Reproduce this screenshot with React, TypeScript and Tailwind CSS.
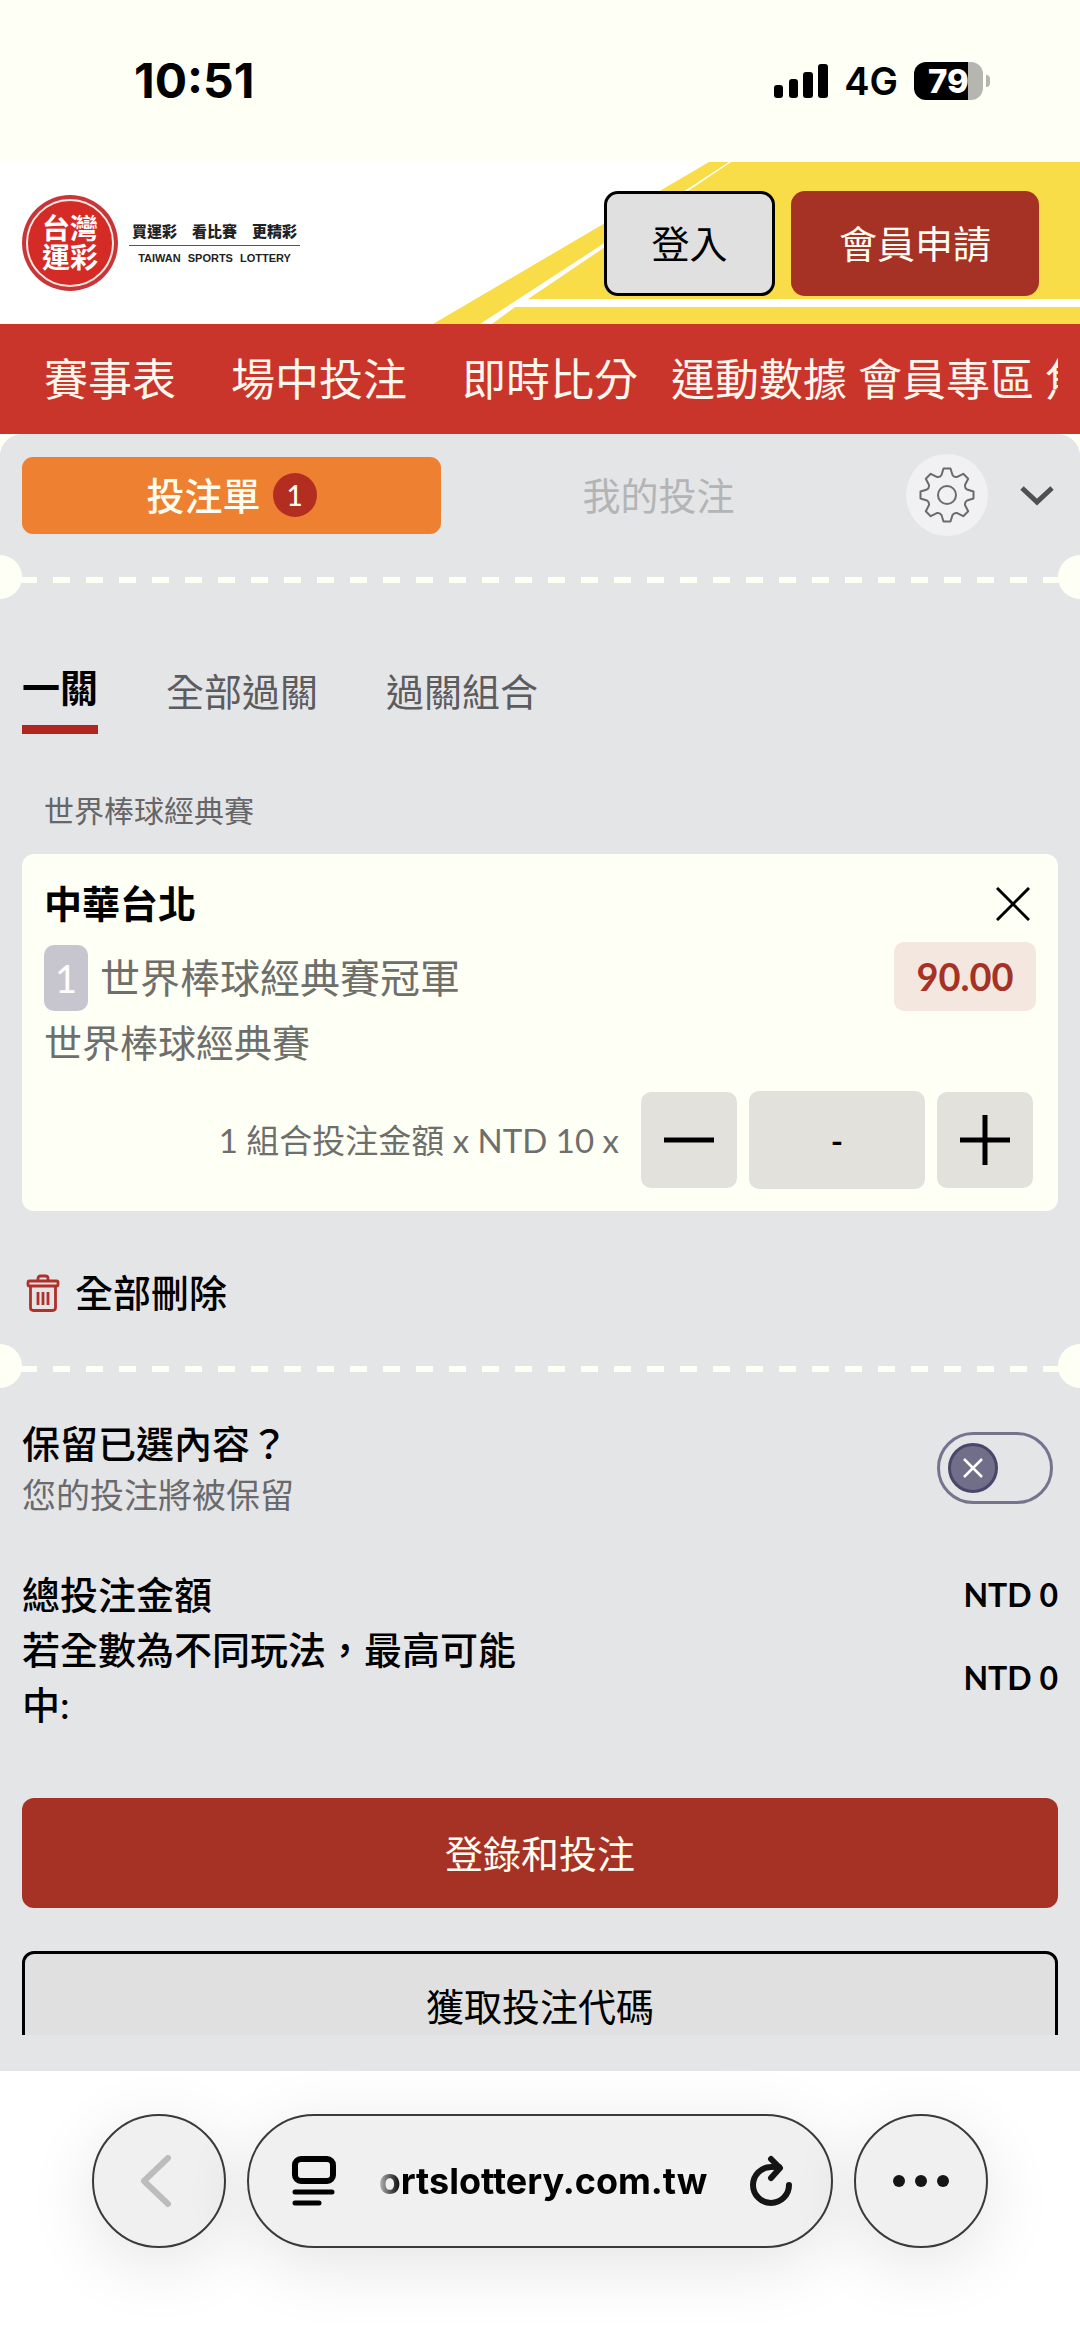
import { useState } from 'react'

const navItems = [
  { label: '賽事表', wide: true },
  { label: '場中投注', wide: true },
  { label: '即時比分', wide: true },
  { label: '運動數據', wide: false },
  { label: '會員專區', wide: false },
  { label: '焦點賽事', wide: false },
]

const betTypes = ['一關', '全部過關', '過關組合']

function StatusBar() {
  return (
    <div className="flex h-[162px] items-center justify-between pl-[134px] pr-[90px] font-['Inter',sans-serif] text-black">
      <span className="text-[48px] font-bold leading-[54px]">10:51</span>
      <div className="flex items-center">
        <svg width="54" height="34" viewBox="0 0 54 34" className="mr-4">
          <rect x="0" y="21" width="9" height="13" rx="3" />
          <rect x="15" y="15" width="9" height="19" rx="3" />
          <rect x="29" y="8" width="10" height="26" rx="3" />
          <rect x="44" y="0" width="10" height="34" rx="3" />
        </svg>
        <span className="text-[38px] font-semibold leading-[46px]">4G</span>
        <div className="ml-4 flex h-[38px] w-[69px] items-center justify-center rounded-[12px] bg-linear-to-r from-black from-78% to-[#b5b6b0] to-78%">
          <span className="text-[33px] font-extrabold leading-[38px] text-white">79</span>
        </div>
        <div className="ml-[3px] h-3 w-1 rounded-r-full bg-[#b5b6b0]" />
      </div>
    </div>
  )
}

function Logo() {
  return (
    <a href="#" className="flex items-center gap-[11px] text-[#222]">
      <span className="flex size-24 items-center justify-center rounded-full bg-[#c9363a] p-1">
        <span className="grid size-full place-content-center rounded-full border-2 border-[#fbe9e4] bg-[#d42b27] text-center text-[28px] font-bold leading-[29px] text-white">
          <span>台灣</span>
          <span>運彩</span>
        </span>
      </span>
      <span className="flex w-[171px] flex-col items-center">
        <span className="flex w-full justify-between border-b border-[#555] px-[3px] pb-1 text-[15px] font-black leading-5">
          <span>買運彩</span>
          <span>看比賽</span>
          <span>更精彩</span>
        </span>
        <span className="flex gap-[7px] pt-1 font-['Liberation_Sans',sans-serif] text-[11px] font-bold leading-4">
          <span>TAIWAN</span>
          <span>SPORTS</span>
          <span>LOTTERY</span>
        </span>
      </span>
    </a>
  )
}

function Header() {
  return (
    <header className="relative flex h-[162px] items-center justify-between bg-white pl-[22px] pr-[41px]">
      <svg className="absolute right-0 top-0" width="650" height="162" viewBox="0 0 650 162">
        <path d="M279 0H299L50 162H3Z" fill="#f8dd48" />
        <path d="M301 0H650V137H98Z" fill="#f8dd48" />
        <path d="M85 145H650V162H62Z" fill="#f8dd48" />
      </svg>
      <Logo />
      <div className="relative flex gap-4 text-[38px]">
        <button className="h-[105px] w-[171px] rounded-[14px] border-3 border-black bg-[#e0e0e0] text-black">登入</button>
        <button className="h-[105px] w-[248px] rounded-[14px] bg-[#a63225] text-[#fffcf2]">會員申請</button>
      </div>
    </header>
  )
}

function Divider() {
  return (
    <div className="relative flex h-11 items-center overflow-hidden">
      <div className="absolute -left-[22px] size-11 rounded-full bg-[#fefff5]" />
      <div className="absolute -right-[22px] size-11 rounded-full bg-[#fefff5]" />
      <svg width="100%" height="12" className="mx-5 mt-[6px]">
        <line x1="0" y1="6" x2="100%" y2="6" stroke="#fefff5" strokeWidth="6" strokeDasharray="17 16" />
      </svg>
    </div>
  )
}

function SlipHeader() {
  return (
    <div className="flex items-center pl-[22px] pr-[26px] pt-5">
      <button className="flex h-[77px] flex-1 items-center justify-center gap-3 rounded-[11px] bg-[#ee8031] text-[38px] font-medium text-[#fffcf0]">
        投注單
        <span className="flex size-11 items-center justify-center rounded-full bg-[#b32d20] text-[28px]">1</span>
      </button>
      <button className="ml-2 h-[77px] flex-1 text-[38px] text-[#b3b4b5]">我的投注</button>
      <button aria-label="設定" className="ml-[38px] flex size-[82px] items-center justify-center rounded-full bg-[#f1f1f4]">
        <svg width="60" height="60" viewBox="-30 -30 60 60" fill="none" stroke="#6b6b6d" strokeWidth="2" strokeLinejoin="round">
          <path d="M-3.5-26.5H3.5L5.5-20Q7-17.5 10.2-18.1L16.3-21.2L21.2-16.3L18.1-10.2Q17.5-7 20-5.5L26.5-3.5V3.5L20 5.5Q17.5 7 18.1 10.2L21.2 16.3L16.3 21.2L10.2 18.1Q7 17.5 5.5 20L3.5 26.5H-3.5L-5.5 20Q-7 17.5-10.2 18.1L-16.3 21.2L-21.2 16.3L-18.1 10.2Q-17.5 7-20 5.5L-26.5 3.5V-3.5L-20-5.5Q-17.5-7-18.1-10.2L-21.2-16.3L-16.3-21.2L-10.2-18.1Q-7-17.5-5.5-20Z" />
          <circle r="9" />
        </svg>
      </button>
      <button aria-label="收合" className="ml-8">
        <svg width="34" height="24" viewBox="0 0 34 24" fill="none" stroke="#4f5052" strokeWidth="5">
          <path d="M2 5L17 19L32 5" />
        </svg>
      </button>
    </div>
  )
}

function BetCard() {
  return (
    <section className="rounded-[12px] bg-[#fefff5] px-[22px] py-[22px]">
      <div className="flex items-center justify-between">
        <h2 className="text-[38px] font-bold leading-[55px] text-black">中華台北</h2>
        <button aria-label="移除" className="mr-[6px]">
          <svg width="34" height="34" viewBox="0 0 34 34" stroke="black" strokeWidth="3">
            <path d="M1 1L33 33M33 1L1 33" />
          </svg>
        </button>
      </div>
      <div className="mt-[11px] flex items-end justify-between">
        <div className="flex items-center gap-3">
          <span className="flex h-[66px] w-11 items-center justify-center rounded-[10px] bg-[#c7c6ce] text-[38px] text-white">1</span>
          <span className="text-[40px] leading-[55px] text-[#6e6e6b]">世界棒球經典賽冠軍</span>
        </div>
        <span className="flex h-[69px] w-[142px] items-center justify-center rounded-[10px] bg-[#f3e7df] text-[38px] font-bold text-[#a63225]">
          90.00
        </span>
      </div>
      <p className="mt-1 text-[38px] leading-[55px] text-[#6e6e6b]">世界棒球經典賽</p>
      <div className="mt-[21px] flex items-center justify-end gap-3 pr-[3px]">
        <label htmlFor="stake" className="mr-[10px] text-[33px] leading-[44px] text-[#6e6e6b]">
          1 組合投注金額 x NTD 10 x
        </label>
        <button aria-label="減少" className="flex size-24 items-center justify-center rounded-[10px] bg-[#e2e1db]">
          <svg width="50" height="50" viewBox="0 0 50 50" stroke="black" strokeWidth="5">
            <path d="M0 25H50" />
          </svg>
        </button>
        <input
          id="stake"
          type="text"
          defaultValue="-"
          className="h-[98px] w-44 rounded-[10px] bg-[#e2e1db] text-center text-[33px] font-bold text-black"
        />
        <button aria-label="增加" className="flex size-24 items-center justify-center rounded-[10px] bg-[#e2e1db]">
          <svg width="50" height="50" viewBox="0 0 50 50" stroke="black" strokeWidth="5">
            <path d="M0 25H50M25 0V50" />
          </svg>
        </button>
      </div>
    </section>
  )
}

function BrowserBar() {
  return (
    <footer className="flex h-[269px] justify-center gap-[21px] bg-white px-[92px] pt-[43px] font-['Inter',sans-serif]">
      <button
        aria-label="上一頁"
        className="flex size-[134px] items-center justify-center rounded-full border-2 border-[#3a3a3a] bg-[#f0f0f0] shadow-[0_16px_70px_rgba(0,0,0,0.11)]"
      >
        <svg width="36" height="56" viewBox="0 0 36 56" fill="none" stroke="#bcbcbc" strokeWidth="6" strokeLinecap="round" strokeLinejoin="round">
          <path d="M27 5L3 28L27 51" />
        </svg>
      </button>
      <div className="flex h-[134px] flex-1 items-center justify-between rounded-full border-2 border-[#3a3a3a] bg-[#f0f0f0] pl-[42px] pr-[38px] shadow-[0_16px_70px_rgba(0,0,0,0.11)]">
        <svg width="46" height="52" viewBox="0 0 46 52" fill="none" stroke="black" strokeWidth="6" strokeLinecap="round">
          <rect x="4" y="4" width="38" height="22" rx="6" />
          <path d="M4 37H41M4 48H28" strokeWidth="5" />
        </svg>
        <span className="bg-linear-to-r from-[#bbb] to-black to-8% bg-clip-text text-[36px] font-bold leading-[44px] text-transparent">
          ortslottery.com.tw
        </span>
        <button aria-label="重新載入">
          <svg width="44" height="52" viewBox="0 0 44 52" fill="none" stroke="#151515" strokeWidth="6" strokeLinecap="round" strokeLinejoin="round">
            <path d="M30 12H22A18 18 0 1 0 40 30" />
            <path d="M22 4L31 13L22 23" />
          </svg>
        </button>
      </div>
      <button
        aria-label="更多"
        className="flex size-[134px] items-center justify-center gap-[10px] rounded-full border-2 border-[#3a3a3a] bg-[#f0f0f0] shadow-[0_16px_70px_rgba(0,0,0,0.11)]"
      >
        <span className="size-3 rounded-full bg-[#151515]" />
        <span className="size-3 rounded-full bg-[#151515]" />
        <span className="size-3 rounded-full bg-[#151515]" />
      </button>
    </footer>
  )
}

export default function App() {
  const [betType, setBetType] = useState('一關')
  const [keep, setKeep] = useState(false)

  return (
    <div className="overflow-hidden bg-[#fefff5] font-['Lato','Noto_Sans_CJK_TC',sans-serif]">
      <StatusBar />
      <Header />

      <nav className="h-[110px] bg-[#c9342b] px-[22px]">
        <div className="flex h-full items-center gap-[11px] overflow-hidden">
          {navItems.map((item) => (
            <a
              key={item.label}
              href="#"
              className={`shrink-0 text-[44px] leading-[64px] text-[#fff6ec] ${item.wide ? 'px-[22px]' : ''}`}
            >
              {item.label}
            </a>
          ))}
        </div>
      </nav>

      <main className="rounded-t-[22px] bg-[#e4e5e7]">
        <SlipHeader />
        <div className="mt-[19px]">
          <Divider />
        </div>

        <div className="px-[22px]">
          {/* Bet types */}
          <div className="flex items-center gap-[68px] pt-[61px] text-[38px] leading-[55px]">
            {betTypes.map((type) => (
              <button
                key={type}
                onClick={() => setBetType(type)}
                className={
                  type === betType
                    ? 'border-b-9 border-[#b0261f] pb-[10px] font-bold text-black'
                    : 'pb-3 text-[#5c5c5e]'
                }
              >
                {type}
              </button>
            ))}
          </div>

          <p className="mt-[54px] px-[22px] text-[30px] leading-[44px] text-[#666668]">世界棒球經典賽</p>
          <div className="mt-[22px]">
            <BetCard />
          </div>

          <button className="mt-[54px] flex items-center gap-[15px] pl-1 text-[38px] font-medium leading-[55px] text-black">
            <svg width="34" height="38" viewBox="0 0 34 38" fill="none" stroke="#b0302a" strokeWidth="2.8" strokeLinejoin="round">
              <path d="M12 7V4.500Q12 2 14.500 2H19.500Q22 2 22 4.500V7" />
              <rect x="2" y="7" width="30" height="5" rx="1.500" />
              <path d="M4.500 12V33.500Q4.500 36.500 7.500 36.500H26.500Q29.500 36.500 29.500 33.500V12" />
              <path d="M12 18V31M17 18V31M22 18V31" />
            </svg>
            全部刪除
          </button>
        </div>

        <div className="mt-6">
          <Divider />
        </div>

        <div className="px-[22px]">
          {/* Keep selections */}
          <div className="mt-7 flex items-center justify-between">
            <div>
              <p className="text-[38px] font-medium leading-[55px] text-black">保留已選內容？</p>
              <p className="text-[34px] leading-[48px] text-[#6a6a6c]">您的投注將被保留</p>
            </div>
            <label className="mr-[5px] flex h-[72px] w-[116px] items-center rounded-full border-3 border-[#75738d] px-2">
              <input
                type="checkbox"
                aria-label="保留已選內容"
                checked={keep}
                onChange={(e) => setKeep(e.target.checked)}
                className="peer sr-only"
              />
              <span className="flex size-[50px] items-center justify-center rounded-full border-3 border-[#48466a] bg-[#706e88] peer-checked:ml-auto">
                <svg width="20" height="20" viewBox="0 0 20 20" stroke="white" strokeWidth="2.500">
                  <path d="M1 1L19 19M19 1L1 19" />
                </svg>
              </span>
            </label>
          </div>

          {/* Totals */}
          <dl className="mt-12 text-[38px] font-medium leading-[55px] text-black">
            <div className="flex items-center justify-between">
              <dt>總投注金額</dt>
              <dd className="text-[32px] font-bold">NTD 0</dd>
            </div>
            <div className="flex items-center justify-between">
              <dt className="w-1/2">若全數為不同玩法，最高可能中:</dt>
              <dd className="text-[32px] font-bold">NTD 0</dd>
            </div>
          </dl>

          <button className="mt-[66px] h-[110px] w-full rounded-[12px] bg-[#a63225] text-[38px] text-[#fffcf2]">
            登錄和投注
          </button>
          <div className="mt-[43px] h-[84px] overflow-hidden">
            <button className="h-[110px] w-full rounded-[12px] border-3 border-black bg-[#e0e0e0] text-[38px] text-black">
              獲取投注代碼
            </button>
          </div>
          <div className="h-9" />
        </div>
      </main>

      <BrowserBar />
    </div>
  )
}
